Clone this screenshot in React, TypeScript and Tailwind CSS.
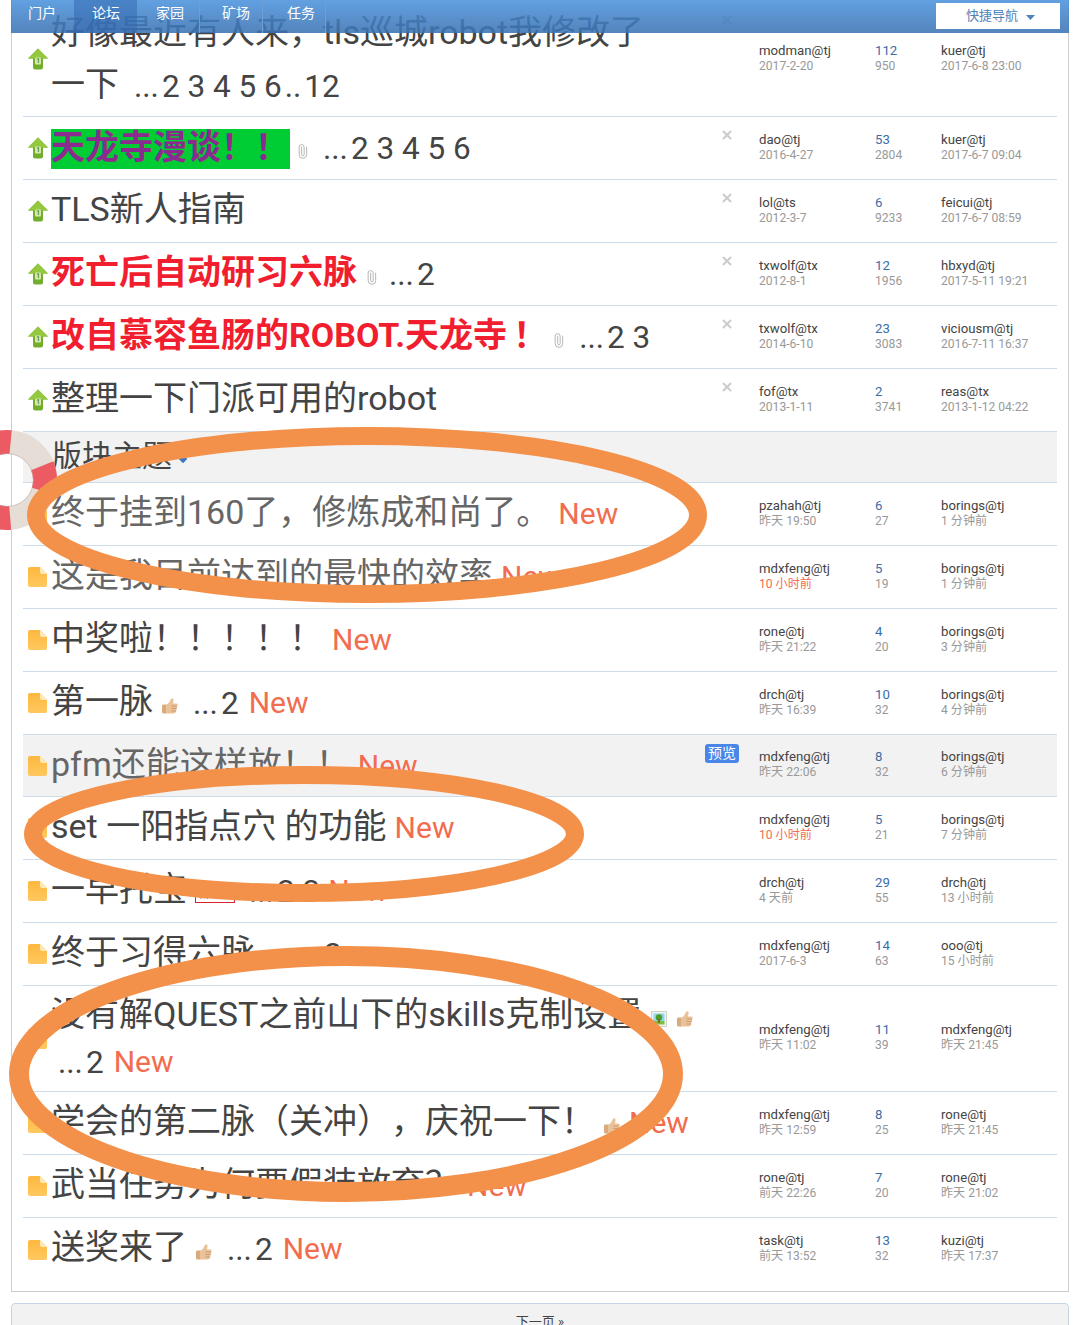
import { ReactNode } from 'react';
import { Paperclip, X } from 'lucide-react';

const UpIcon = () => (
  <svg width="20" height="22" viewBox="0 0 20 22" className="block">
    <path d="M10 0.5 L20 10.5 L15 10.5 L15 19.5 Q15 21.5 13 21.5 L7 21.5 Q5 21.5 5 19.5 L5 10.5 L0 10.5 Z" fill="#72ad2c" />
    <path d="M10 0.5 L20 10.5 L0 10.5 Z" fill="#93c83f" />
    <rect x="7" y="9.5" width="6" height="7" rx="1" fill="#d5e9ad" />
    <text x="10" y="15.2" textAnchor="middle" fontSize="6.5" fontWeight="700" fill="#4e8a1c" fontFamily="Roboto, sans-serif">1</text>
  </svg>
);

const FileIcon = () => (
  <svg width="19" height="20" viewBox="0 0 19 20" className="block">
    <defs>
      <linearGradient id="fileFill" x1="0" y1="0" x2="0" y2="1">
        <stop offset="0" stopColor="#fdb83f" />
        <stop offset="1" stopColor="#ffc85f" />
      </linearGradient>
    </defs>
    <path d="M2 0 L12 0 L19 7 L19 18 Q19 20 17 20 L2 20 Q0 20 0 18 L0 2 Q0 0 2 0 Z" fill="url(#fileFill)" />
    <path d="M12 0 L19 7 L14 7 Q12 7 12 5 Z" fill="#ffe9b5" />
  </svg>
);

const Clip = () => <Paperclip className="inline-block w-[15px] h-[15px] text-[#b5b5b5] align-[-1px] -rotate-45" strokeWidth={1.5} />;

const Thumb = ({ className = '' }: { className?: string }) => (
  <svg width="19" height="18" viewBox="0 0 18 18" className={`inline-block align-[-2px] ${className}`}>
    <path d="M1.5 8.5 Q1.5 7.5 3 7.5 L6 7.5 L6 16.5 L3 16.5 Q1.5 16.5 1.5 15 Z" fill="#d8aa7c" />
    <path d="M5.5 8 Q9 6 10 3 Q10.5 1 12 1.2 Q13.5 1.6 13 4 L12.4 6.5 L16 6.5 Q17.5 6.8 17 8.4 L15.6 14.5 Q15 16.5 13 16.5 L5.5 16.5 Z" fill="#e9c29a" />
    <path d="M11 9 L16.4 9 M11 11.5 L16 11.5 M11 14 L15.4 14" stroke="#c4925f" strokeWidth="0.8" />
  </svg>
);

const ImageIcon = () => (
  <svg width="16" height="16" viewBox="0 0 16 16" className="inline-block align-[-1px]">
    <rect x="0.5" y="0.5" width="15" height="15" fill="#f1f4ee" stroke="#cfd5cb" />
    <rect x="2.5" y="2.5" width="11" height="8" fill="#8fd3ee" />
    <rect x="2.5" y="10" width="11" height="3.5" fill="#7cbf3a" />
    <circle cx="8" cy="6.5" r="3.2" fill="#4d9e28" />
    <rect x="7.2" y="8" width="1.6" height="4" fill="#7a5a2c" />
  </svg>
);

const Pages = ({ children, className = '' }: { children: ReactNode; className?: string }) => (
  <span className={`text-[31.5px] text-[#444444] align-[-1px] ${className}`}>
    ...<span className="ml-[3px]">{children}</span>
  </span>
);

const New = ({ className = '' }: { className?: string }) => (
  <span className={`text-[30px] text-[#f26c4f] ${className}`}>New</span>
);

type Row = {
  icon: 'up' | 'file';
  title: ReactNode;
  author: string;
  date: string;
  hot?: boolean;
  replies: string;
  views: string;
  last: string;
  lastDate: string;
  height: string;
  tall?: boolean;
  close?: boolean;
  shaded?: boolean;
  preview?: boolean;
};

const rows: Row[] = [
  {
    icon: 'up',
    close: true,
    tall: true,
    height: 'h-[115px] leading-[52px]',
    title: (
      <>
        <span className="text-[#444444]">好像最近有人来，tls巡城robot我修改了</span>
        <br />
        <span className="text-[#444444]">一下</span>
        <Pages className="ml-[15px]">
          2 3 4 5 6<span className="ml-[3px]">..</span>
          <span className="ml-[3px]">12</span>
        </Pages>
      </>
    ),
    author: 'modman@tj',
    date: '2017-2-20',
    replies: '112',
    views: '950',
    last: 'kuer@tj',
    lastDate: '2017-6-8 23:00',
  },
  {
    icon: 'up',
    close: true,
    height: 'h-[63px]',
    title: (
      <>
        <span className="inline-block w-[239px] h-[40px] leading-[36px] align-[-1px] bg-[#00cc33] font-bold text-[#8b2a8f]">天龙寺漫谈！！</span>
        <span className="ml-[5px]"><Clip /></span>
        <Pages className="ml-[13px]">2 3 4 5 6</Pages>
      </>
    ),
    author: 'dao@tj',
    date: '2016-4-27',
    replies: '53',
    views: '2804',
    last: 'kuer@tj',
    lastDate: '2017-6-7 09:04',
  },
  {
    icon: 'up',
    close: true,
    height: 'h-[63px]',
    title: <span className="text-[#444444]">TLS新人指南</span>,
    author: 'lol@ts',
    date: '2012-3-7',
    replies: '6',
    views: '9233',
    last: 'feicui@tj',
    lastDate: '2017-6-7 08:59',
  },
  {
    icon: 'up',
    close: true,
    height: 'h-[63px]',
    title: (
      <>
        <span className="font-bold text-[#f01e2e]">死亡后自动研习六脉</span>
        <span className="ml-[7px]"><Clip /></span>
        <Pages className="ml-[10px]">2</Pages>
      </>
    ),
    author: 'txwolf@tx',
    date: '2012-8-1',
    replies: '12',
    views: '1956',
    last: 'hbxyd@tj',
    lastDate: '2017-5-11 19:21',
  },
  {
    icon: 'up',
    close: true,
    height: 'h-[63px]',
    title: (
      <>
        <span className="font-bold text-[#f01e2e]">改自慕容鱼肠的ROBOT.天龙寺<span className="ml-[6px]">！</span></span>
        <span className="ml-[4px]"><Clip /></span>
        <Pages className="ml-[13px]">2 3</Pages>
      </>
    ),
    author: 'txwolf@tx',
    date: '2014-6-10',
    replies: '23',
    views: '3083',
    last: 'viciousm@tj',
    lastDate: '2016-7-11 16:37',
  },
  {
    icon: 'up',
    close: true,
    height: 'h-[63px]',
    title: <span className="text-[#444444]">整理一下门派可用的robot</span>,
    author: 'fof@tx',
    date: '2013-1-11',
    replies: '2',
    views: '3741',
    last: 'reas@tx',
    lastDate: '2013-1-12 04:22',
  },
];

const rows2: Row[] = [
  {
    icon: 'file',
    height: 'h-[63px]',
    title: (
      <>
        <span className="text-[#666666]">终于挂到160了，修炼成和尚了。</span>
        <New className="ml-[8px]" />
      </>
    ),
    author: 'pzahah@tj',
    date: '昨天 19:50',
    replies: '6',
    views: '27',
    last: 'borings@tj',
    lastDate: '1 分钟前',
  },
  {
    icon: 'file',
    height: 'h-[63px]',
    title: (
      <>
        <span className="text-[#666666]">这是我目前达到的最快的效率</span>
        <New className="ml-[8px]" />
      </>
    ),
    author: 'mdxfeng@tj',
    date: '10 小时前',
    hot: true,
    replies: '5',
    views: '19',
    last: 'borings@tj',
    lastDate: '1 分钟前',
  },
  {
    icon: 'file',
    height: 'h-[63px]',
    title: (
      <>
        <span className="text-[#444444]">中奖啦！！！！！</span>
        <New className="ml-[9px]" />
      </>
    ),
    author: 'rone@tj',
    date: '昨天 21:22',
    replies: '4',
    views: '20',
    last: 'borings@tj',
    lastDate: '3 分钟前',
  },
  {
    icon: 'file',
    height: 'h-[63px]',
    title: (
      <>
        <span className="text-[#444444]">第一脉</span>
        <Thumb className="ml-[7px]" />
        <Pages className="ml-[14px]">2</Pages>
        <New className="ml-[10px]" />
      </>
    ),
    author: 'drch@tj',
    date: '昨天 16:39',
    replies: '10',
    views: '32',
    last: 'borings@tj',
    lastDate: '4 分钟前',
  },
  {
    icon: 'file',
    height: 'h-[62px]',
    shaded: true,
    preview: true,
    title: (
      <>
        <span className="text-[#666666]">pfm还能这样放！！</span>
        <New className="ml-[8px]" />
      </>
    ),
    author: 'mdxfeng@tj',
    date: '昨天 22:06',
    replies: '8',
    views: '32',
    last: 'borings@tj',
    lastDate: '6 分钟前',
  },
  {
    icon: 'file',
    height: 'h-[63px]',
    title: (
      <>
        <span className="text-[#444444]">set 一阳指点穴 的功能</span>
        <New className="ml-[8px]" />
      </>
    ),
    author: 'mdxfeng@tj',
    date: '10 小时前',
    hot: true,
    replies: '5',
    views: '21',
    last: 'borings@tj',
    lastDate: '7 分钟前',
  },
  {
    icon: 'file',
    height: 'h-[63px]',
    title: (
      <>
        <span className="text-[#444444]">一早托宝</span>
        <span className="inline-block ml-[8px] w-[40px] h-[16px] border border-[#d9232e] text-[11px] leading-[14px] text-[#d9232e] text-center align-[3px]">新人帖</span>
        <Pages className="ml-[14px]">2 3</Pages>
        <New className="ml-[8px]" />
      </>
    ),
    author: 'drch@tj',
    date: '4 天前',
    replies: '29',
    views: '55',
    last: 'drch@tj',
    lastDate: '13 小时前',
  },
  {
    icon: 'file',
    height: 'h-[63px]',
    title: (
      <>
        <span className="text-[#444444]">终于习得六脉</span>
        <Thumb className="ml-[7px]" />
        <Pages className="ml-[15px]">2</Pages>
      </>
    ),
    author: 'mdxfeng@tj',
    date: '2017-6-3',
    replies: '14',
    views: '63',
    last: 'ooo@tj',
    lastDate: '15 小时前',
  },
  {
    icon: 'file',
    tall: true,
    height: 'h-[106px] leading-[46px]',
    title: (
      <>
        <span className="text-[#444444]">没有解QUEST之前山下的skills克制设置</span>
        <span className="ml-[10px]"><ImageIcon /></span>
        <Thumb className="ml-[8px]" />
        <br />
        <Pages className="ml-[7px]">2</Pages>
        <New className="ml-[10px]" />
      </>
    ),
    author: 'mdxfeng@tj',
    date: '昨天 11:02',
    replies: '11',
    views: '39',
    last: 'mdxfeng@tj',
    lastDate: '昨天 21:45',
  },
  {
    icon: 'file',
    height: 'h-[63px]',
    title: (
      <>
        <span className="text-[#444444]">学会的第二脉（关冲），庆祝一下！</span>
        <Thumb className="ml-[7px]" />
        <New className="ml-[8px]" />
      </>
    ),
    author: 'mdxfeng@tj',
    date: '昨天 12:59',
    replies: '8',
    views: '25',
    last: 'rone@tj',
    lastDate: '昨天 21:45',
  },
  {
    icon: 'file',
    height: 'h-[63px]',
    title: (
      <>
        <span className="text-[#444444]">武当任务为何要假装放弃？</span>
        <New className="ml-[8px]" />
      </>
    ),
    author: 'rone@tj',
    date: '前天 22:26',
    replies: '7',
    views: '20',
    last: 'rone@tj',
    lastDate: '昨天 21:02',
  },
  {
    icon: 'file',
    height: 'h-[63px]',
    title: (
      <>
        <span className="text-[#444444]">送奖来了</span>
        <Thumb className="ml-[7px]" />
        <Pages className="ml-[14px]">2</Pages>
        <New className="ml-[10px]" />
      </>
    ),
    author: 'task@tj',
    date: '前天 13:52',
    replies: '13',
    views: '32',
    last: 'kuzi@tj',
    lastDate: '昨天 17:37',
  },
];

function ThreadRow({ row, isLast }: { row: Row; isLast?: boolean }) {
  return (
    <div className={`flex items-center ${row.height} ${isLast ? '' : 'border-b border-[#cddcea]'} ${row.shaded ? 'bg-[#f2f2f2]' : ''}`}>
      <div className="w-[28px] pl-[5px] shrink-0">{row.icon === 'up' ? <UpIcon /> : <FileIcon />}</div>
      <div className={`relative w-[708px] shrink-0 self-stretch flex items-center ${row.tall ? '' : 'pb-[3px]'}`}>
        <div className="text-[34px] whitespace-nowrap [text-spacing-trim:space-all]">{row.title}</div>
        {row.close && <X className="absolute top-[11px] left-[669px] w-[14px] h-[14px] text-[#cccccc]" strokeWidth={3.5} />}
        {row.preview && (
          <span className="absolute top-[9px] left-[654px] w-[34px] h-[19px] rounded-[3px] bg-[#4a86e8] text-white text-[14px] leading-[19px] text-center">预览</span>
        )}
      </div>
      <div className="w-[116px] shrink-0 pb-[2px] leading-[15px]">
        <div className="text-[13.2px] text-[#444444]">{row.author}</div>
        <div className={`mt-[1px] text-[12.1px] ${row.hot ? 'text-[#f26c4f]' : 'text-[#999999]'}`}>{row.date}</div>
      </div>
      <div className="w-[66px] shrink-0 pb-[2px] leading-[15px]">
        <div className="text-[13.2px] text-[#3a6ea5]">{row.replies}</div>
        <div className="mt-[1px] text-[12.1px] text-[#999999]">{row.views}</div>
      </div>
      <div className="flex-1 pb-[2px] leading-[15px]">
        <div className="text-[13.2px] text-[#444444]">{row.last}</div>
        <div className="mt-[1px] text-[12.1px] text-[#999999]">{row.lastDate}</div>
      </div>
    </div>
  );
}

export default function App() {
  return (
    <div className="relative w-[1080px] h-[1325px] overflow-hidden bg-white font-['Roboto','Noto_Sans_CJK_SC',sans-serif]">
      {/* Thread list */}
      <div className="mx-[11px] pt-[2px] px-[11px] pb-[10px] border-x border-b border-[#cccccc]">
        {rows.map((row, i) => (
          <ThreadRow key={i} row={row} />
        ))}
        <div className="h-[51px] bg-[#f2f2f2] border-b border-[#cddcea] flex items-center pl-[29px] pb-[3px]">
          <span className="text-[30px] text-[#444444]">版块主题</span>
          <span className="ml-[8px] mt-[6px] w-[6px] h-[6px] bg-[#3a78c2] rotate-45" />
        </div>
        {rows2.map((row, i) => (
          <ThreadRow key={i} row={row} isLast={i === rows2.length - 1} />
        ))}
      </div>

      {/* Next page */}
      <div className="mx-[11px] mt-[11px] h-[40px] pt-[8px] border border-[#c5d5e5] rounded-t-[4px] bg-[#f2f2f2] text-center text-[13px] text-[#444444]">
        下一页 »
      </div>

      {/* Top navigation bar, over the scrolled page */}
      <div className="absolute top-0 left-[11px] w-[1058px] h-[33px] bg-gradient-to-b from-[#4a92dc]/[.87] to-[#3a72b2]/[.87] flex text-[14px] leading-[27px] text-white">
        <a className="w-[63px] pl-[17px] shrink-0">门户</a>
        <a className="w-[63px] pl-[18px] shrink-0 bg-[#2f66ae]/50">论坛</a>
        <a className="w-[63px] pl-[19px] shrink-0 border-r border-[#6d9fd6]">家园</a>
        <a className="w-[63px] pl-[22px] shrink-0 border-r border-[#6d9fd6]">矿场</a>
        <a className="w-[63px] pl-[24px] shrink-0 border-r border-[#6d9fd6]">任务</a>
        <div className="ml-auto mr-[9px] mt-[3px] w-[124px] h-[26px] pb-[2px] bg-white text-[13px] text-[#4f83b8] flex items-center pl-[30px] gap-[8px]">
          快捷导航
          <svg width="9" height="5" viewBox="0 0 9 5" className="mt-[4px]">
            <path d="M0 0 L9 0 L4.5 5 Z" fill="#4f83b8" />
          </svg>
        </div>
      </div>

      {/* Life ring */}
      <svg className="absolute top-[428px] left-0" width="60" height="104" viewBox="0 0 60 104">
        <circle cx="7" cy="52" r="38" fill="none" stroke="#e6ddd6" strokeWidth="24" />
        <circle cx="7" cy="52" r="38" fill="none" stroke="#ec5a63" strokeWidth="24" strokeDasharray="26 45 26.5 73 26.5 41.8" transform="rotate(-22 7 52)" />
        <circle cx="7" cy="52" r="26.5" fill="none" stroke="#b9aaa0" strokeOpacity="0.5" strokeWidth="1" />
      </svg>

      {/* Hand-drawn ellipses */}
      <svg className="absolute top-0 left-0 pointer-events-none" width="1080" height="1325" viewBox="0 0 1080 1325">
        <g fill="none" stroke="#f3914a">
          <ellipse cx="367" cy="515" rx="331" ry="79" strokeWidth="18" />
          <ellipse cx="304" cy="834" rx="271" ry="59" strokeWidth="18" />
          <ellipse cx="346" cy="1074" rx="327" ry="118" strokeWidth="20" />
        </g>
      </svg>
    </div>
  );
}
